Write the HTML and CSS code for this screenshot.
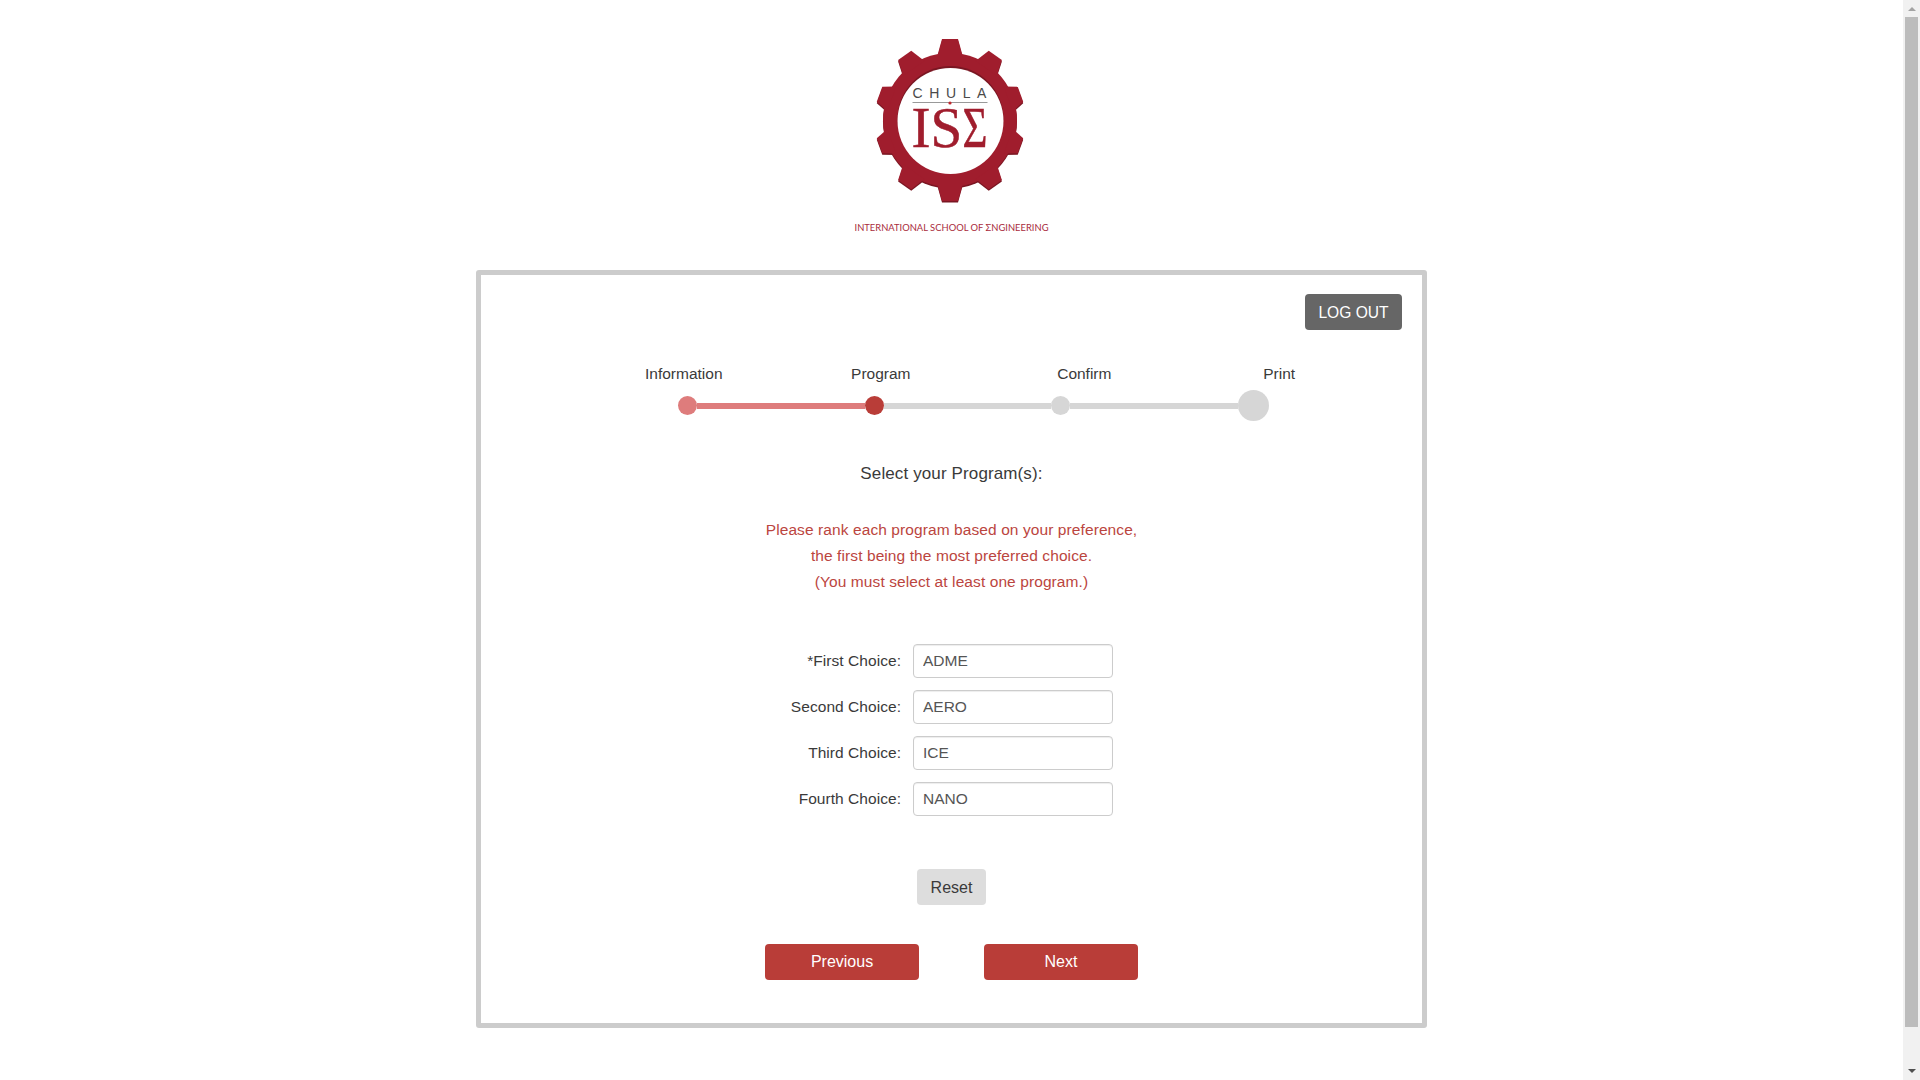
FILE: index.html
```html
<!DOCTYPE html>
<html lang="en">
<head>
<meta charset="utf-8">
<title>Select your Program(s)</title>
<link rel="stylesheet" href="styles.css">
</head>
<body>
<div class="page">
  <main class="content">
    <header class="logo-bar">
      <svg class="logo" width="240" height="224" viewBox="831.5 20 240 224" xmlns="http://www.w3.org/2000/svg">
        <defs>
          <g id="gear">
            <circle r="67"/>
            <polygon points="-13,-63 -8,-81 8,-81 13,-63"/>
            <polygon points="-13,-63 -8,-79 8,-79 13,-63" transform="rotate(35)"/>
            <polygon points="-13,-62 -8,-75 8,-75 13,-62" transform="rotate(70)"/>
            <polygon points="-13,-62 -8,-75 8,-75 13,-62" transform="rotate(110)"/>
            <polygon points="-13,-63 -8,-79 8,-79 13,-63" transform="rotate(145)"/>
            <polygon points="-13,-63 -8,-81 8,-81 13,-63" transform="rotate(180)"/>
            <polygon points="-13,-63 -8,-79 8,-79 13,-63" transform="rotate(215)"/>
            <polygon points="-13,-62 -8,-75 8,-75 13,-62" transform="rotate(250)"/>
            <polygon points="-13,-62 -8,-75 8,-75 13,-62" transform="rotate(290)"/>
            <polygon points="-13,-63 -8,-79 8,-79 13,-63" transform="rotate(325)"/>
          </g>
        </defs>
        <use href="#gear" x="949.5" y="121.5" fill="#7a1622"/>
        <use href="#gear" x="949.5" y="120" fill="#a01d2d"/>
        <circle cx="950" cy="119" r="53" fill="#7a1622"/>
        <circle cx="950" cy="121" r="53" fill="#fff"/>
        <text class="logo-chula" x="912" y="98">CHULA</text>
        <rect x="912" y="102" width="75" height="1" fill="#999"/>
        <circle cx="949.5" cy="103" r="1.6" fill="#c0272d"/>
        <text class="logo-ise" x="911 930" y="147">IS</text>
        <text class="logo-ise" x="962" y="147" textLength="25" lengthAdjust="spacingAndGlyphs">Σ</text>
        <text class="logo-school" x="854" y="231" textLength="194" lengthAdjust="spacingAndGlyphs">INTERNATIONAL SCHOOL OF ΣNGINEERING</text>
      </svg>
    </header>

    <section class="card">
      <div class="card-top">
        <button class="btn btn-logout" type="button">LOG OUT</button>
      </div>

      <div class="step-labels">
        <span>Information</span>
        <span>Program</span>
        <span>Confirm</span>
        <span>Print</span>
      </div>
      <div class="step-track">
        <span class="dot dot-done"></span>
        <span class="line line-done"></span>
        <span class="dot dot-current"></span>
        <span class="line"></span>
        <span class="dot"></span>
        <span class="line"></span>
        <span class="dot dot-last"></span>
      </div>

      <h1 class="title">Select your Program(s):</h1>
      <p class="notice">
        Please rank each program based on your preference,<br>
        the first being the most preferred choice.<br>
        (You must select at least one program.)
      </p>

      <form class="choices">
        <label class="choice-label" for="c1">*First Choice:</label>
        <input class="choice-input" id="c1" type="text" value="ADME">
        <label class="choice-label" for="c2">Second Choice:</label>
        <input class="choice-input" id="c2" type="text" value="AERO">
        <label class="choice-label" for="c3">Third Choice:</label>
        <input class="choice-input" id="c3" type="text" value="ICE">
        <label class="choice-label" for="c4">Fourth Choice:</label>
        <input class="choice-input" id="c4" type="text" value="NANO">
      </form>

      <div class="reset-row">
        <button class="btn btn-reset" type="button">Reset</button>
      </div>
      <div class="nav-row">
        <button class="btn btn-primary" type="button">Previous</button>
        <button class="btn btn-primary" type="button">Next</button>
      </div>
    </section>
  </main>

  <aside class="scrollbar" aria-hidden="true">
    <span class="arrow arrow-up"></span>
    <span class="thumb"></span>
    <span class="arrow arrow-down"></span>
  </aside>
</div>
</body>
</html>
```

FILE: styles.css
```css
* { box-sizing: border-box; }

html, body {
  margin: 0;
  height: 100%;
  overflow: hidden;
  background: #fff;
}

body {
  font-family: "Liberation Sans", Arial, sans-serif;
  font-size: 15.5px;
  color: #3a3a3a;
}

.page {
  display: flex;
  height: 1080px;
}

.content {
  flex: 1;
  min-width: 0;
  display: flex;
  flex-direction: column;
  align-items: center;
}

.logo-bar {
  height: 270px;
  flex: none;
}

.logo {
  display: block;
  margin-top: 20px;
}

.logo-chula {
  font-family: "Liberation Sans", Arial, sans-serif;
  font-size: 14px;
  letter-spacing: 6.6px;
  fill: #4a4a4a;
}

.logo-ise {
  font-family: "Liberation Serif", "Times New Roman", serif;
  font-size: 57px;
  fill: #a01d2d;
  stroke: #a01d2d;
  stroke-width: .5px;
}

.logo-school {
  font-family: "Lato", "Liberation Sans", sans-serif;
  font-size: 9.4px;
  fill: #a92b3c;
}

.card {
  width: 951px;
  height: 758px;
  flex: none;
  border: 5px solid #ccc;
  border-radius: 3px;
  padding: 19px 20px 0 0;
}

.card-top {
  display: flex;
  justify-content: flex-end;
}

.btn {
  height: 36px;
  border: 0;
  border-radius: 4px;
  padding: 0;
  font-family: inherit;
  font-size: 16px;
  line-height: 36px;
  display: block;
}

.btn-logout {
  width: 97px;
  padding-top: 1px;
  background: #666;
  color: #fff;
  font-size: 15.6px;
}

.step-labels {
  display: grid;
  grid-template-columns: repeat(3, 206.1px) auto;
  margin: 34px 0 0 164px;
  line-height: 20px;
}

.step-track {
  display: flex;
  align-items: center;
  width: 591px;
  height: 31px;
  margin: 6px 0 0 197px;
}

.dot {
  width: 19px;
  height: 19px;
  border-radius: 50%;
  background: #d6d6d6;
  flex: none;
}

.dot-done { background: #de7c7c; }
.dot-current { background: #b93d38; }
.dot-last { width: 31px; height: 31px; }

.line {
  flex: 1;
  height: 6px;
  background: #d6d6d6;
}

.line-done { background: #de7c7c; }

.title {
  margin: 42px 0 0 20px;
  font-size: 17px;
  font-weight: 400;
  line-height: 22px;
  text-align: center;
  letter-spacing: .12px;
}

.notice {
  margin: 32px 0 0 20px;
  line-height: 26px;
  text-align: center;
  color: #bb4540;
  letter-spacing: .09px;
}

.choices {
  display: grid;
  grid-template-columns: 161px 200px;
  column-gap: 12px;
  row-gap: 12px;
  align-items: center;
  margin: 49px 0 0 259px;
}

.choice-label {
  text-align: right;
  letter-spacing: .05px;
}

.choice-input {
  height: 34px;
  width: 200px;
  padding: 0 9px;
  border: 1px solid #ccc;
  border-radius: 4px;
  box-shadow: inset 0 1px 1px rgba(0, 0, 0, .075);
  font-family: inherit;
  font-size: 15.5px;
  color: #555;
  background: #fff;
}

.reset-row {
  display: flex;
  justify-content: center;
  margin: 53px 0 0 20px;
}

.btn-reset {
  width: 69px;
  padding-top: 1px;
  background: #ddd;
  color: #3a3a3a;
}

.nav-row {
  display: flex;
  justify-content: center;
  gap: 65px;
  margin: 39px 0 0 20px;
}

.btn-primary {
  width: 154px;
  background: #b93d38;
  color: #fff;
}

.scrollbar {
  width: 17px;
  flex: none;
  background: #f1f1f1;
  position: relative;
}

.thumb {
  position: absolute;
  left: 2px;
  top: 17px;
  width: 13px;
  height: 1010px;
  background: #bcbcbc;
}

.arrow {
  position: absolute;
  left: 4.5px;
  width: 0;
  height: 0;
  border-left: 4px solid transparent;
  border-right: 4px solid transparent;
}

.arrow-up {
  top: 7px;
  border-bottom: 4px solid #a3a3a3;
}

.arrow-down {
  bottom: 7px;
  border-top: 4px solid #505050;
}
```
